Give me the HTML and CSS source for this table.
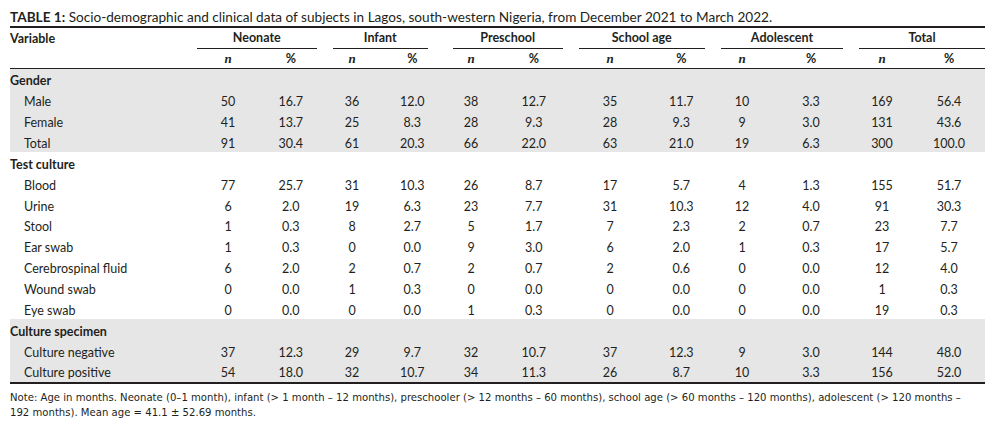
FILE: index.html
```html
<!DOCTYPE html>
<html lang="en">
<head>
<meta charset="utf-8">
<title>Table 1</title>
<link rel="stylesheet" href="styles.css">
</head>
<body>
<div class="page">
  <p class="caption"><b>TABLE 1:</b> Socio-demographic and clinical data of subjects in Lagos, south-western Nigeria, from December 2021 to March 2022.</p>
  <table class="data">
    <colgroup>
      <col class="c-var">
      <col class="c-neo-n"><col class="c-neo-p">
      <col class="c-inf-n"><col class="c-inf-p">
      <col class="c-pre-n"><col class="c-pre-p">
      <col class="c-sch-n"><col class="c-sch-p">
      <col class="c-ado-n"><col class="c-ado-p">
      <col class="c-tot-n"><col class="c-tot-p">
    </colgroup>
    <thead>
      <tr class="h1">
        <th class="var">Variable</th>
        <th colspan="2"><div class="grp">Neonate</div></th>
        <th colspan="2"><div class="grp">Infant</div></th>
        <th colspan="2"><div class="grp">Preschool</div></th>
        <th colspan="2"><div class="grp">School age</div></th>
        <th colspan="2"><div class="grp">Adolescent</div></th>
        <th colspan="2"><div class="grp last">Total</div></th>
      </tr>
      <tr class="h2">
        <th></th>
        <th><i class="n">n</i></th><th>%</th>
        <th><i class="n">n</i></th><th>%</th>
        <th><i class="n">n</i></th><th>%</th>
        <th><i class="n">n</i></th><th>%</th>
        <th><i class="n">n</i></th><th>%</th>
        <th><i class="n">n</i></th><th>%</th>
      </tr>
    </thead>
    <tbody class="shade">
      <tr class="sec"><td class="lab">Gender</td><td></td><td></td><td></td><td></td><td></td><td></td><td></td><td></td><td></td><td></td><td></td><td></td></tr>
      <tr><td class="sub">Male</td><td>50</td><td>16.7</td><td>36</td><td>12.0</td><td>38</td><td>12.7</td><td>35</td><td>11.7</td><td>10</td><td>3.3</td><td>169</td><td>56.4</td></tr>
      <tr><td class="sub">Female</td><td>41</td><td>13.7</td><td>25</td><td>8.3</td><td>28</td><td>9.3</td><td>28</td><td>9.3</td><td>9</td><td>3.0</td><td>131</td><td>43.6</td></tr>
      <tr><td class="sub">Total</td><td>91</td><td>30.4</td><td>61</td><td>20.3</td><td>66</td><td>22.0</td><td>63</td><td>21.0</td><td>19</td><td>6.3</td><td>300</td><td>100.0</td></tr>
    </tbody>
    <tbody>
      <tr class="sec"><td class="lab">Test culture</td><td></td><td></td><td></td><td></td><td></td><td></td><td></td><td></td><td></td><td></td><td></td><td></td></tr>
      <tr><td class="sub">Blood</td><td>77</td><td>25.7</td><td>31</td><td>10.3</td><td>26</td><td>8.7</td><td>17</td><td>5.7</td><td>4</td><td>1.3</td><td>155</td><td>51.7</td></tr>
      <tr><td class="sub">Urine</td><td>6</td><td>2.0</td><td>19</td><td>6.3</td><td>23</td><td>7.7</td><td>31</td><td>10.3</td><td>12</td><td>4.0</td><td>91</td><td>30.3</td></tr>
      <tr><td class="sub">Stool</td><td>1</td><td>0.3</td><td>8</td><td>2.7</td><td>5</td><td>1.7</td><td>7</td><td>2.3</td><td>2</td><td>0.7</td><td>23</td><td>7.7</td></tr>
      <tr><td class="sub">Ear swab</td><td>1</td><td>0.3</td><td>0</td><td>0.0</td><td>9</td><td>3.0</td><td>6</td><td>2.0</td><td>1</td><td>0.3</td><td>17</td><td>5.7</td></tr>
      <tr><td class="sub">Cerebrospinal fluid</td><td>6</td><td>2.0</td><td>2</td><td>0.7</td><td>2</td><td>0.7</td><td>2</td><td>0.6</td><td>0</td><td>0.0</td><td>12</td><td>4.0</td></tr>
      <tr><td class="sub">Wound swab</td><td>0</td><td>0.0</td><td>1</td><td>0.3</td><td>0</td><td>0.0</td><td>0</td><td>0.0</td><td>0</td><td>0.0</td><td>1</td><td>0.3</td></tr>
      <tr><td class="sub">Eye swab</td><td>0</td><td>0.0</td><td>0</td><td>0.0</td><td>1</td><td>0.3</td><td>0</td><td>0.0</td><td>0</td><td>0.0</td><td>19</td><td>0.3</td></tr>
    </tbody>
    <tbody class="shade">
      <tr class="sec"><td class="lab">Culture specimen</td><td></td><td></td><td></td><td></td><td></td><td></td><td></td><td></td><td></td><td></td><td></td><td></td></tr>
      <tr><td class="sub">Culture negative</td><td>37</td><td>12.3</td><td>29</td><td>9.7</td><td>32</td><td>10.7</td><td>37</td><td>12.3</td><td>9</td><td>3.0</td><td>144</td><td>48.0</td></tr>
      <tr><td class="sub">Culture positive</td><td>54</td><td>18.0</td><td>32</td><td>10.7</td><td>34</td><td>11.3</td><td>26</td><td>8.7</td><td>10</td><td>3.3</td><td>156</td><td>52.0</td></tr>
    </tbody>
  </table>
  <p class="note">Note: Age in months. Neonate (0–1 month), infant (&gt; 1 month – 12 months), preschooler (&gt; 12 months – 60 months), school age (&gt; 60 months – 120 months), adolescent (&gt; 120 months –<br>192 months). Mean age = 41.1 ± 52.69 months.</p>
</div>
</body>
</html>
```

FILE: styles.css
```css
html, body {
  margin: 0;
  padding: 0;
  background: #ffffff;
}

.page {
  padding: 9px 10px 0 10px;
  width: 975px;
  color: #231f20;
  font-family: Lato, "Open Sans", sans-serif;
}

.caption {
  margin: 0;
  font-size: 13.6px;
  line-height: 16px;
  height: 17px;
  white-space: nowrap;
}

.caption b {
  font-weight: 700;
}

.data {
  width: 975px;
  table-layout: fixed;
  border-collapse: collapse;
  font-size: 12.5px;
  border-top: 2px solid #231f20;
  border-bottom: 2px solid #231f20;
}

.c-var { width: 180px; }
.c-neo-n { width: 76px; }
.c-neo-p { width: 58.5px; }
.c-inf-n { width: 55px; }
.c-inf-p { width: 65.5px; }
.c-pre-n { width: 52px; }
.c-pre-p { width: 73.5px; }
.c-sch-n { width: 79px; }
.c-sch-p { width: 63.5px; }
.c-ado-n { width: 58px; }
.c-ado-p { width: 80px; }
.c-tot-n { width: 62px; }
.c-tot-p { width: 72px; }

.data th,
.data td {
  padding: 0;
  text-align: center;
  white-space: nowrap;
}

.data th:nth-child(3),
.data td:nth-child(3) {
  padding-right: 9px;
}

.h1 th {
  height: 21px;
  font-weight: 700;
  vertical-align: middle;
}

.h1 th.var {
  text-align: left;
}

.grp {
  margin: 0 8px 0 8px;
  height: 20px;
  line-height: 20px;
  border-bottom: 1px solid #231f20;
}

.h1 th:nth-child(2) .grp {
  margin-left: 7px;
}

.grp.last {
  margin-right: 0;
}

.h2 th {
  height: 19px;
  font-weight: 700;
  border-bottom: 1px solid #231f20;
  vertical-align: middle;
}

.n {
  font-family: "Liberation Serif", serif;
  font-style: italic;
  font-weight: 700;
  font-size: 13px;
}

.data tbody td {
  height: 17.86px;
  vertical-align: middle;
  padding-top: 3px;
}

.shade {
  background: #e6e6e6;
}

.lab {
  text-align: left !important;
  font-weight: 700;
}

.sub {
  text-align: left !important;
  padding-left: 14px !important;
}

.note {
  margin: 6px 0 0 0;
  font-family: "DejaVu Sans", Verdana, sans-serif;
  font-size: 10.1px;
  line-height: 15px;
  white-space: nowrap;
}
```
